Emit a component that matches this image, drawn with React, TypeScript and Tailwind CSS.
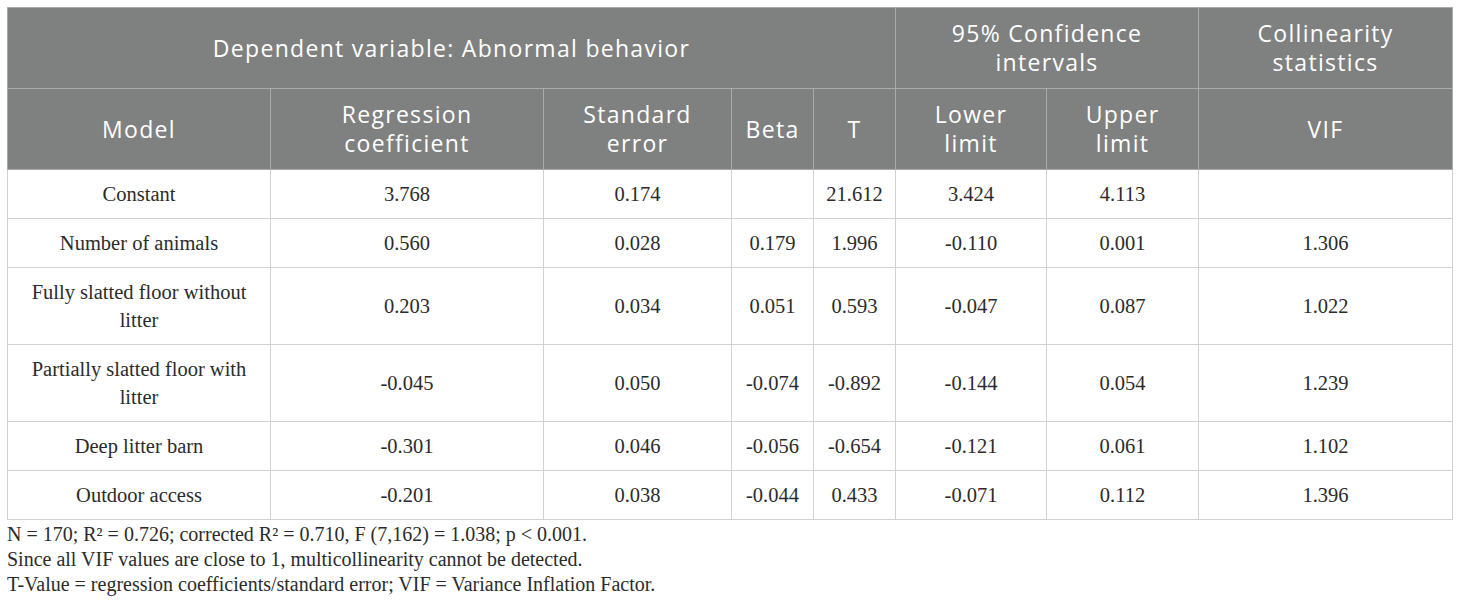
const rows: Array<[string, string, string, string, string, string, string, string]> = [
  ["Constant", "3.768", "0.174", "", "21.612", "3.424", "4.113", ""],
  ["Number of animals", "0.560", "0.028", "0.179", "1.996", "-0.110", "0.001", "1.306"],
  ["Fully slatted floor without\nlitter", "0.203", "0.034", "0.051", "0.593", "-0.047", "0.087", "1.022"],
  ["Partially slatted floor with\nlitter", "-0.045", "0.050", "-0.074", "-0.892", "-0.144", "0.054", "1.239"],
  ["Deep litter barn", "-0.301", "0.046", "-0.056", "-0.654", "-0.121", "0.061", "1.102"],
  ["Outdoor access", "-0.201", "0.038", "-0.044", "0.433", "-0.071", "0.112", "1.396"],
];

const th = "border border-[#a9abaa] px-2 py-[11px] text-center align-middle font-normal";
const td = "border border-[#d2d2d2] px-2 py-[10px] text-center align-middle";

export default function App() {
  return (
    <div className="bg-white pl-[7px] pt-[7px] pr-[8px] w-[1460px] min-h-[601px]">
      <table
        className="table-fixed border-collapse w-[1445px]"
        style={{ fontFamily: '"Open Sans", "Liberation Sans", sans-serif' }}
      >
        <colgroup>
          <col className="w-[263px]" />
          <col className="w-[273px]" />
          <col className="w-[188px]" />
          <col className="w-[82px]" />
          <col className="w-[82px]" />
          <col className="w-[151px]" />
          <col className="w-[152px]" />
          <col className="w-[254px]" />
        </colgroup>
        <thead className="bg-[#7f8180] text-white text-[23px] leading-[29px] tracking-[1.3px]">
          <tr className="h-[81px]">
            <th colSpan={5} className={th}>Dependent variable: Abnormal behavior</th>
            <th colSpan={2} className={th}>95% Confidence<br />intervals</th>
            <th className={th}>Collinearity<br />statistics</th>
          </tr>
          <tr className="h-[81px]">
            <th className={th}>Model</th>
            <th className={th}>Regression<br />coefficient</th>
            <th className={th}>Standard<br />error</th>
            <th className={th}>Beta</th>
            <th className={th}>T</th>
            <th className={th}>Lower<br />limit</th>
            <th className={th}>Upper<br />limit</th>
            <th className={th}>VIF</th>
          </tr>
        </thead>
        <tbody
          className="text-[#2b2b2b] text-[20.5px] leading-[28px]"
          style={{ fontFamily: '"Liberation Serif", "DejaVu Serif", serif' }}
        >
          {rows.map((r, i) => (
            <tr key={i}>
              {r.map((c, j) => (
                <td key={j} className={td + (j === 0 ? " whitespace-pre-line" : "")}>
                  {c}
                </td>
              ))}
            </tr>
          ))}
        </tbody>
      </table>
      <div
        className="mt-[2px] text-[#2b2b2b] text-[20px] leading-[25px]"
        style={{ fontFamily: '"Liberation Serif", "DejaVu Serif", serif' }}
      >
        <p>N = 170; R² = 0.726; corrected R² = 0.710, F (7,162) = 1.038; p &lt; 0.001.</p>
        <p>Since all VIF values are close to 1, multicollinearity cannot be detected.</p>
        <p>T-Value = regression coefficients/standard error; VIF = Variance Inflation Factor.</p>
      </div>
    </div>
  );
}
